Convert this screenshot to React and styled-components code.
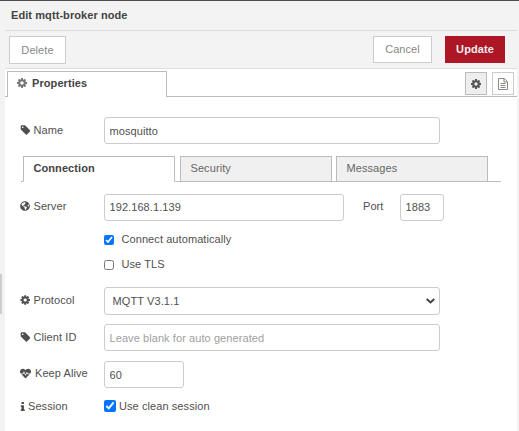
import React from 'react';
import styled, { createGlobalStyle } from 'styled-components';
import { FaGlobeAmericas, FaHeartbeat } from 'react-icons/fa';

const GlobalStyle = createGlobalStyle`
  *, *::before, *::after { box-sizing: border-box; }
  body {
    margin: 0;
    overflow: hidden;
    background: #f3f3f3;
    color: #505050;
    font: 11px/20px "Liberation Sans", Arial, sans-serif;
    letter-spacing: 0.08px;
  }
  input, select, button { font: inherit; letter-spacing: inherit; margin: 0; }
`;

const Screen = styled.div`
  display: flex;
  width: 519px;
  height: 431px;
  border-top: 1px solid #514c50;
`;

const Separator = styled.div`
  flex: 0 0 5px;
  padding-top: 273px;
`;

const Grip = styled.div`
  width: 2px;
  height: 40px;
  background: #ccc;
`;

const Tray = styled.main`
  flex: 0 0 512px;
  display: flex;
  flex-direction: column;
  background: #fff;
`;

const Header = styled.header`
  height: 30px;
  padding: 4px 6px;
  background: #f3f3f3;
  border-bottom: 1px solid #ddd;
  color: #444;
  font-weight: bold;
`;

const Toolbar = styled.div`
  display: flex;
  align-items: flex-start;
  height: 38px;
  padding: 5px 12px 0 4px;
  background: #f3f3f3;
  border-bottom: 1px solid #ddd;
`;

const Button = styled.button`
  width: ${(p) => p.$width}px;
  height: ${(p) => p.$height || 27}px;
  margin-left: ${(p) => p.$gap || '0'};
  padding: 0;
  border: 1px solid ${(p) => (p.$primary ? '#ad1625' : '#ccc')};
  background: ${(p) => (p.$primary ? '#ad1625' : '#fff')};
  color: ${(p) => (p.$primary ? '#eee' : '#888')};
  font-weight: ${(p) => (p.$primary ? 'bold' : 'normal')};
  line-height: 23px;
`;

const TrayTabs = styled.nav`
  display: flex;
  height: 28px;
  padding-top: 2px;
  background: linear-gradient(#bbb, #bbb) 0 100% / 100% 1px no-repeat;
`;

const TrayTab = styled.div`
  display: flex;
  align-items: center;
  gap: 5px;
  width: 160px;
  height: 26px;
  margin-left: 2px;
  padding: 0 9px 3px;
  border: 1px solid #bbb;
  border-bottom: 0;
  background: #fff;
  color: #444;
  font-weight: bold;
`;

const IconButtons = styled.div`
  display: flex;
  gap: 5px;
  margin: 1px 3px 0 auto;
`;

const IconButton = styled.button`
  display: flex;
  align-items: center;
  justify-content: center;
  width: 22px;
  height: 23px;
  padding: 0;
  border: 1px solid ${(p) => (p.$active ? '#bbb' : '#ccc')};
  background: ${(p) => (p.$active ? '#eee' : '#fff')};
  color: ${(p) => (p.$active ? '#555' : '#8c8883')};
`;

const Form = styled.form`
  display: flex;
  flex-direction: column;
  padding: 20px 15px 0;
`;

const Row = styled.div`
  display: flex;
  height: ${(p) => p.$height || 27}px;
  margin-bottom: ${(p) => p.$gap || 0}px;
`;

const Label = styled.label`
  display: flex;
  align-items: center;
  gap: ${(p) => p.$gap || 3.5}px;
  width: 84px;
  height: ${(p) => p.$height || 26}px;
  white-space: nowrap;
`;

const PortLabel = styled.label`
  width: 37px;
  margin-left: 19px;
  line-height: 25px;
`;

const TextInput = styled.input`
  width: ${(p) => p.$width}px;
  height: 27px;
  padding: ${(p) => (p.$raised ? '0 4.5px 1px' : '1px 4.5px 0')};
  border: 1px solid #ccc;
  border-radius: 3px;
  background: #fff;
  color: #505050;
  outline: 0;
  &::placeholder { color: #a0a0a0; opacity: 1; }
`;

const SelectBox = styled.div`
  display: grid;
  width: 336px;
  height: 28px;
  > * { grid-area: 1 / 1; }
  > svg { place-self: center end; margin-right: 5px; pointer-events: none; }
`;

const Select = styled.select`
  appearance: none;
  width: 100%;
  padding: 0 7.5px;
  border: 1px solid #ccc;
  border-radius: 3px;
  background: #fff;
  color: #505050;
  letter-spacing: 0.1px;
`;

const TabStrip = styled.nav`
  display: flex;
  gap: 4px;
  width: 480px;
  height: 26px;
  margin: 0 0 12px 1px;
  padding-left: 2px;
  background: linear-gradient(#bbb, #bbb) 0 100% / 100% 1px no-repeat;
`;

const Tab = styled.div`
  width: 152px;
  height: 26px;
  margin-right: ${(p) => (p.$active ? 1 : 0)}px;
  padding-left: 9.5px;
  border: 1px solid #bbb;
  border-bottom-color: ${(p) => (p.$active ? '#fff' : '#bbb')};
  background: ${(p) => (p.$active ? '#fff' : '#f0f0f0')};
  color: ${(p) => (p.$active ? '#444' : '#666')};
  font-weight: ${(p) => (p.$active ? 'bold' : 'normal')};
  line-height: 23px;
`;

const CheckLabel = styled.label`
  display: flex;
  align-items: center;
  gap: ${(p) => p.$gap}px;
  margin-left: ${(p) => p.$indent || 0}px;
`;

const CheckText = styled.span`
  margin-top: ${(p) => (p.$raised ? -2 : 0)}px;
`;

const Checkbox = styled.input`
  width: ${(p) => p.$size}px;
  height: ${(p) => p.$size}px;
  accent-color: #0075ff;
`;

const Glyph = ({ d, size = 11, width = size, box = '0 0 1792 1792', color = 'currentColor' }) => (
  <svg width={width} height={size} viewBox={box} fill={color} aria-hidden="true">
    <path d={d} />
  </svg>
);

const COG =
  'M1152 896q0-106-75-181t-181-75-181 75-75 181 75 181 181 75 181-75 75-181zm512-109v222q0 12-8 23t-20 13l-185 28q-19 54-39 91 35 50 107 138 10 12 10 25t-9 23q-27 37-99 108t-94 71q-12 0-26-9l-138-108q-44 23-91 38-16 136-29 186-7 28-36 28h-222q-14 0-24.5-8.5t-11.5-21.5l-28-184q-49-16-90-37l-141 107q-10 9-25 9-14 0-25-11-126-114-165-168-7-10-7-23 0-12 8-23 15-21 51-66.5t54-70.5q-27-50-41-99l-183-27q-13-2-21-12.5t-8-23.5v-222q0-12 8-23t19-13l186-28q14-46 39-92-40-57-107-138-10-12-10-24 0-10 9-23 26-36 98.5-107.5t94.5-71.5q13 0 26 10l138 107q44-23 91-38 16-136 29-186 7-28 36-28h222q14 0 24.5 8.5t11.5 21.5l28 184q49 16 90 37l142-107q9-9 24-9 13 0 25 10 129 119 165 170 7 8 7 22 0 12-8 23-15 21-51 66.5t-54 70.5q26 50 41 98l183 28q13 2 21 12.5t8 23.5z';
const TAG =
  'M576 448q0-53-37.5-90.5t-90.5-37.5-90.5 37.5-37.5 90.5 37.5 90.5 90.5 37.5 90.5-37.5 37.5-90.5zm1067 576q0 53-37 90l-491 492q-39 37-91 37-53 0-90-37l-715-716q-38-37-64.5-101t-26.5-117v-416q0-52 38-90t90-38h416q53 0 117 26.5t102 64.5l715 714q37 39 37 91z';
const INFO =
  'M1216 1344v128q0 26-19 45t-45 19h-512q-26 0-45-19t-19-45v-128q0-26 19-45t45-19h64v-384h-64q-26 0-45-19t-19-45v-128q0-26 19-45t45-19h384q26 0 45 19t19 45v576h64q26 0 45 19t19 45zm-128-1152v192q0 26-19 45t-45 19h-256q-26 0-45-19t-19-45v-192q0-26 19-45t45-19h256q26 0 45 19t19 45z';

const CogIcon = ({ size = 10, color }) => (
  <Glyph d={COG} size={size} box="128 128 1536 1536" color={color} />
);
const LabelCogIcon = () => <Glyph d={COG} size={10} box="64 128 1600 1536" />;
const TagIcon = () => <Glyph d={TAG} size={10} box="20 100 1570 1570" />;
const InfoIcon = () => <Glyph d={INFO} size={9} width={5} box="490 128 740 1408" />;

const FileIcon = () => (
  <svg width="10" height="12" viewBox="0 0 10 12" fill="none" stroke="currentColor" aria-hidden="true">
    <path d="M.5.5h5.8l3.2 3.2v7.8h-9zM6 .7v3.3h3.3M2.5 5.5h5M2.5 7.5h5M2.5 9.5h5" />
  </svg>
);

const ChevronIcon = () => (
  <svg width="9" height="6" viewBox="0 0 9 6" fill="none" stroke="#444" strokeWidth="2" aria-hidden="true">
    <path d="M.7 1l3.8 3.5L8.3 1" />
  </svg>
);

export default function App() {
  return (
    <>
      <GlobalStyle />
      <Screen>
        <Separator>
          <Grip />
        </Separator>
        <Tray>
          <Header>Edit mqtt-broker node</Header>
          <Toolbar>
            <Button $width={57} $height={28}>Delete</Button>
            <Button $width={59} $gap="auto">Cancel</Button>
            <Button $width={60} $gap="13px" $primary>Update</Button>
          </Toolbar>
          <TrayTabs>
            <TrayTab>
              <CogIcon color="#777" />
              Properties
            </TrayTab>
            <IconButtons>
              <IconButton $active aria-label="Properties"><CogIcon /></IconButton>
              <IconButton aria-label="Description"><FileIcon /></IconButton>
            </IconButtons>
          </TrayTabs>
          <Form>
            <Row $gap={12}>
              <Label><TagIcon />Name</Label>
              <TextInput $width={336} defaultValue="mosquitto" />
            </Row>
            <TabStrip>
              <Tab $active>Connection</Tab>
              <Tab>Security</Tab>
              <Tab>Messages</Tab>
            </TabStrip>
            <Row $gap={8}>
              <Label $height={24}><FaGlobeAmericas size={10} />Server</Label>
              <TextInput $width={240} $raised defaultValue="192.168.1.139" />
              <PortLabel>Port</PortLabel>
              <TextInput $width={44} $raised defaultValue="1883" />
            </Row>
            <Row $height={22} $gap={3}>
              <CheckLabel $indent={84} $gap={7.5}>
                <Checkbox type="checkbox" $size={10} defaultChecked />
                <CheckText $raised>Connect automatically</CheckText>
              </CheckLabel>
            </Row>
            <Row $height={22} $gap={11}>
              <CheckLabel $indent={84} $gap={7.5}>
                <Checkbox type="checkbox" $size={10} />
                <CheckText $raised>Use TLS</CheckText>
              </CheckLabel>
            </Row>
            <Row $height={28} $gap={9}>
              <Label><LabelCogIcon />Protocol</Label>
              <SelectBox>
                <Select defaultValue="4"><option value="4">MQTT V3.1.1</option></Select>
                <ChevronIcon />
              </SelectBox>
            </Row>
            <Row $gap={10}>
              <Label><TagIcon />Client ID</Label>
              <TextInput $width={336} placeholder="Leave blank for auto generated" />
            </Row>
            <Row $gap={5}>
              <Label $height={24} $gap={4}><FaHeartbeat size={11} />Keep Alive</Label>
              <TextInput $width={80} defaultValue="60" />
            </Row>
            <Row $height={26}>
              <Label $gap={3}><InfoIcon />Session</Label>
              <CheckLabel $gap={3}>
                <Checkbox type="checkbox" $size={12} defaultChecked />
                <CheckText>Use clean session</CheckText>
              </CheckLabel>
            </Row>
          </Form>
        </Tray>
      </Screen>
    </>
  );
}
